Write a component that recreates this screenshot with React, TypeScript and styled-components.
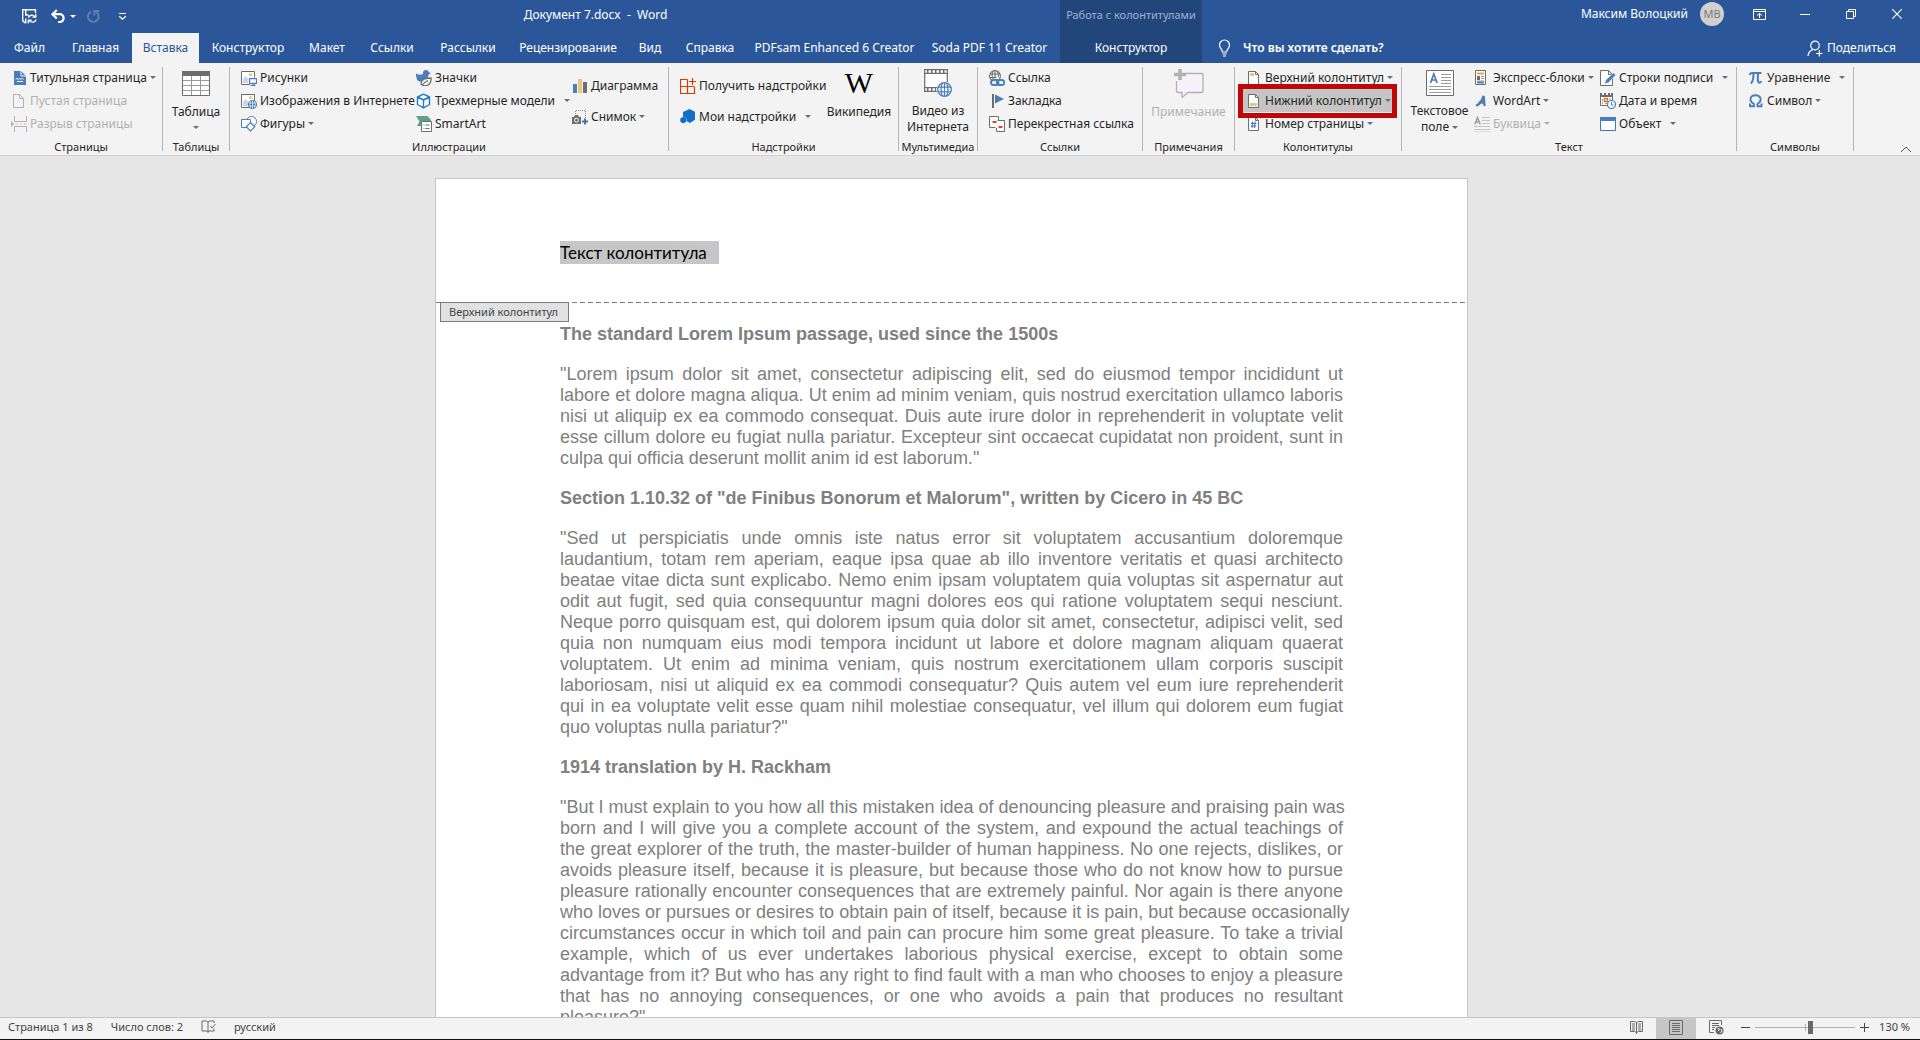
import React from "react";
import styled, { createGlobalStyle, css } from "styled-components";

const ui = `"Noto Sans", "Open Sans", sans-serif`;
const blue = "#2b579a";
const steel = "#4a7ebb";
const grey = "#6d6d6d";
const mute = "#b1b1b1";

const GlobalStyle = createGlobalStyle`
  *, *::before, *::after { box-sizing: border-box; }
  body { margin: 0; background: #e6e6e6; }
  button, input { font: inherit; color: inherit; }
  svg { display: block; flex: none; }
`;

const Shell = styled.div`
  display: flex;
  flex-direction: column;
  height: 100vh;
  overflow: hidden;
  font: 12px/16px ${ui};
  color: #262626;
  border-bottom: 1px solid #111;
`;

/* ---------- window header ---------- */

const Header = styled.header`
  display: grid;
  grid-template-columns: auto auto 1fr;
  grid-template-rows: 33px 30px;
  background: ${blue};
  color: #fff;
  white-space: nowrap;
`;

const PlainButton = styled.button`
  display: flex;
  align-items: center;
  justify-content: center;
  border: 0;
  padding: 0;
  background: none;
  white-space: nowrap;
`;

const TitleBar = styled.div`
  display: flex;
  align-items: center;
  padding: 0 0 8px 20px;
`;

const QuickAccess = styled.div`
  display: flex;
  align-items: center;
  height: 25px;
  padding-top: 8px;
  gap: 10px;
`;

const UndoGroup = styled.div`
  display: flex;
  align-items: center;
  gap: 4px;
  padding-left: 2px;
`;

const CustomizeButton = styled(PlainButton)`
  padding-left: 7px;
`;

const DocTitle = styled.div`
  flex: 1;
  padding: 4px 0 0 4px;
  text-align: center;
  white-space: pre;
`;

const TabBar = styled.nav`
  grid-row: 2;
  display: flex;
  padding-right: 3px;
`;

const Tab = styled(PlainButton)<{ $w: number; $active?: boolean }>`
  width: ${(p) => p.$w}px;
  ${(p) => p.$active && css`
    background: #f3f3f3;
    color: ${blue};
  `}
`;

const ContextTabs = styled.div`
  grid-area: 1 / 2 / 3 / 3;
  display: grid;
  grid-template-rows: 33px 30px;
  width: 142px;
  background: #22457a;
  text-align: center;
`;

const ContextTitle = styled.div`
  padding-top: 7px;
  color: #9fb3d3;
  font-size: 11px;
`;

const WindowBar = styled.div`
  display: flex;
  justify-content: flex-end;
  height: 28px;
`;

const Account = styled(PlainButton)`
  gap: 12px;
  margin-right: 12px;
`;

const Avatar = styled.span`
  width: 24px;
  height: 24px;
  border-radius: 50%;
  background: #d2d0ce;
  color: #7a7a7a;
  font-size: 11px;
  line-height: 24px;
`;

const WindowButton = styled(PlainButton)`
  width: 46px;
`;

const HelpBar = styled.div`
  display: flex;
  align-items: center;
  justify-content: space-between;
  padding: 0 24px 0 16px;
`;

const TellMe = styled.label`
  display: flex;
  align-items: center;
  gap: 12px;
`;

const TellMeInput = styled.input`
  width: 180px;
  border: 0;
  padding: 0;
  background: none;
  font-weight: 600;
  outline: 0;
  &::placeholder { color: #fff; opacity: 1; }
`;

const Share = styled(PlainButton)`
  gap: 4px;
`;

/* ---------- ribbon ---------- */

const Ribbon = styled.div`
  display: flex;
  height: 93px;
  padding-top: 3px;
  border-bottom: 1px solid #d2d2d2;
  background: #f3f3f3;
`;

const Group = styled.section<{ $w: number }>`
  display: flex;
  flex-direction: column;
  flex: none;
  width: ${(p) => p.$w}px;
  background: linear-gradient(#b5b5b5, #b5b5b5) right 1px / 1px 84px no-repeat;
`;

const GroupBody = styled.div<{ $pad: number }>`
  display: flex;
  height: 69px;
  padding-left: ${(p) => p.$pad}px;
`;

const GroupLabel = styled.div`
  padding: 4px 1px 0 0;
  text-align: center;
  white-space: nowrap;
  font-size: 11px;
`;

const Column = styled.div<{ $w?: number; $two?: boolean }>`
  display: flex;
  flex-direction: column;
  align-items: flex-start;
  flex: none;
  width: ${(p) => (p.$w ? p.$w + "px" : "auto")};
  ${(p) => p.$two && css`
    gap: 8px;
    padding-top: 8px;
  `}
`;

const Command = styled(PlainButton)`
  height: 23px;
  gap: 3px;
  &:disabled { color: ${mute}; }
`;

const Caret = styled.span<{ $split?: boolean }>`
  margin-left: ${(p) => (p.$split ? 6 : 0)}px;
  border: solid transparent;
  border-width: 3px 3px 0;
  border-top-color: ${grey};
  :disabled & { border-top-color: ${mute}; }
`;

const BigCommand = styled(PlainButton)<{ $w: number }>`
  flex-direction: column;
  justify-content: flex-start;
  flex: none;
  width: ${(p) => p.$w}px;
  padding-top: 2px;
  line-height: 16px;
  &:disabled { color: ${mute}; }
`;

const BigIcon = styled.span`
  display: flex;
  align-items: center;
  height: 36px;
  padding-bottom: 6px;
`;

const BigCaret = styled(Caret)`
  margin: 6px 0 0;
`;

const Inline = styled.span`
  display: flex;
  align-items: center;
  gap: 3px;
`;

const Highlighted = styled(Command)`
  position: relative;
  width: 149px;
  margin-left: -5px;
  padding-left: 5px;
  justify-content: flex-start;
  background: #c5c5c5;
  &::after {
    content: "";
    position: absolute;
    inset: -5px -5px -6px;
    border: 5px solid #c00606;
  }
`;

const Collapse = styled(PlainButton)`
  margin-left: auto;
  align-self: flex-end;
  padding: 0 8px 2px 0;
`;

/* ---------- document ---------- */

const Workspace = styled.main`
  flex: 1;
  min-height: 0;
  overflow: hidden;
  padding: 22px 17px 0 0;
  background: #e6e6e6;
`;

const Sheet = styled.article`
  width: 1033px;
  margin: 0 auto;
  border: 1px solid #c6c6c6;
  background: #fff;
`;

const PageHeader = styled.header`
  position: relative;
  height: 124px;
  padding: 62px 124px 0;
  background: repeating-linear-gradient(90deg, #7b7b7b 0 5px, transparent 5px 8px) bottom / 100% 1px no-repeat;
`;

const Selected = styled.span`
  display: inline-block;
  padding-right: 12px;
  background: #c6c6c6;
  color: #000;
  font: 17px/23px Lato, "Noto Sans", sans-serif;
`;

const HeaderTag = styled.span`
  position: absolute;
  left: 4px;
  top: 123px;
  padding: 0 10px 0 8px;
  border: 1px solid #7b7b7b;
  background: #e1e1e1;
  color: #444;
  font-size: 11px;
  line-height: 18px;
`;

const PageBody = styled.div`
  padding: 21px 124px 0;
  color: #808080;
  font: 18px/21px "Liberation Sans", Arial, sans-serif;
`;

const Heading = styled.h2`
  margin: 0 0 19px;
  font-size: 18px;
  line-height: 21px;
`;

const Paragraph = styled.p`
  margin: 0 0 19px;
`;

const Line = styled.span`
  display: block;
  white-space: nowrap;
  text-align-last: justify;
  &:last-child { text-align-last: left; }
`;

/* ---------- status bar ---------- */

const StatusBar = styled.footer`
  display: flex;
  align-items: stretch;
  flex: none;
  height: 22px;
  padding: 0 10px 0 8px;
  border-top: 1px solid #c6c6c6;
  background: #f3f3f3;
  color: #444;
  font-size: 11px;
  white-space: nowrap;
`;

const StatusGroup = styled.div<{ $gap: number }>`
  display: flex;
  align-items: center;
  padding-bottom: 3px;
  gap: ${(p) => p.$gap}px;
`;

const Views = styled.div`
  display: flex;
  margin: 0 5px 0 auto;
`;

const ViewButton = styled(PlainButton)<{ $on?: boolean }>`
  width: 40px;
  padding-bottom: 3px;
  background: ${(p) => (p.$on ? "#c6c6c6" : "none")};
`;

const ZoomRange = styled.input`
  appearance: none;
  width: 100px;
  height: 14px;
  margin: 0;
  background:
    linear-gradient(#b0b0b0, #b0b0b0) 50px 50% / 1px 7px no-repeat,
    linear-gradient(#b0b0b0, #b0b0b0) 0 50% / 100% 1px no-repeat;
  &::-webkit-slider-thumb {
    appearance: none;
    width: 5px;
    height: 13px;
    background: #6a6a6a;
  }
`;

const ZoomValue = styled(PlainButton)`
  margin-left: 5px;
`;

/* ---------- icons ---------- */

type IconProps = { w?: number; h?: number; children: React.ReactNode };
const Icon = ({ w = 16, h = 16, children }: IconProps) => (
  <svg width={w} height={h} viewBox={`0 0 ${w} ${h}`} fill="none" aria-hidden="true">{children}</svg>
);

const SaveIcon = () => (
  <Icon w={18} h={17}>
    <path d="M6.500 14.500H4.500L2.700 12.700V1.700H15.500V5M5.700 1.700V7h3M5.700 14.500V10.500" stroke="#fff" strokeWidth="1.400" />
    <path d="M8.200 9.800a4 4 0 0 1 6.800-1.200M15.800 5.800v3.400h-3.400M16.200 11.500a4 4 0 0 1-6.900 1.200M8.300 15.600V12.200h3.400" stroke="#fff" strokeWidth="1.300" />
  </Icon>
);
const UndoIcon = () => (
  <Icon w={16} h={15}>
    <path d="M2 5.200h7.700a3.900 3.900 0 0 1 0 7.800H8" stroke="#fff" strokeWidth="2.200" />
    <path d="M6.800 1 2.400 5.200l4.400 4.200" stroke="#fff" strokeWidth="2.200" />
  </Icon>
);
const RedoIcon = () => (
  <Icon w={15} h={15}>
    <path d="M5 2.600a5.400 5.400 0 1 0 5.200.3M8.300 6.700V2h5" stroke="#5f80b5" strokeWidth="1.900" />
  </Icon>
);
const CustomizeIcon = () => (
  <Icon w={9} h={9}>
    <path d="M1 1.500h7M1.200 4.200l3.300 3 3.300-3" stroke="#fff" strokeWidth="1.200" />
  </Icon>
);
const SmallArrow = () => <Icon w={6} h={4}><path d="M0 0h6L3 3z" fill="#fff" /></Icon>;

const CoverIcon = () => (
  <Icon>
    <path d="M3 1h7l5 5v9H3z" fill={steel} />
    <path d="M10 1v5h5" stroke="#f3f3f3" />
    <path d="m5 9.500 1-1.300 1.300 1.300 1.300-1.300 1.300 1.300 1.300-1.300 1.300 1.300" stroke="#fff" />
    <path d="M6 11.500h6" stroke="#fff" />
  </Icon>
);
const BlankIcon = () => (
  <Icon>
    <path d="M2.500 1.500h6l4 4v9h-10z" fill="#f7f2f9" stroke="#b1b1b1" />
    <path d="M8.500 1.500v4h4" stroke="#b1b1b1" />
  </Icon>
);
const BreakIcon = () => (
  <Icon>
    <path d="M3.500 0v5.500h12V0M3.500 16v-5.500h12V16" fill="#f7f2f9" stroke="#b1b1b1" />
    <path d="M0 5v6l3-3z" fill="#b1b1b1" />
    <path d="M4 8h3m2 0h2m2 0h3" stroke="#c9c9c9" />
  </Icon>
);
const TableIcon = () => (
  <Icon w={28} h={25}>
    <path d="M.5.5h27v24H.5z" fill="#fff" stroke="#6d6d6d" />
    <path d="M0 0h28v5H0z" fill="#6d6d6d" />
    <path d="M1 9.500h26M1 14.500h26M1 19.500h26M9.500 5v19M18.500 5v19" stroke="#9b9b9b" />
  </Icon>
);
const PictureBase = () => (
  <>
    <path d="M.5 1.500h13v13H.500z" fill="#fff" stroke="#6d6d6d" />
    <circle cx="9.500" cy="4.500" r="1.600" fill="#eac282" />
    <path d="M2 13V9l2.500-3 3 3v4z" fill="#c9d6e8" />
  </>
);
const PictureIcon = () => (
  <Icon>
    <PictureBase />
    <path d="M8 7.500h8V13h-3v3H9v-3H7z" fill="#f3f3f3" />
    <path d="M8.600 8.600h6.900v4.800H8.600zM12 13.500V16M9.500 15.500h5" fill="#fff" stroke={steel} strokeWidth="1.200" />
  </Icon>
);
const OnlinePictureIcon = () => (
  <Icon>
    <PictureBase />
    <circle cx="11.500" cy="11.500" r="4.500" fill="#3f74b5" />
    <path d="M11.500 7.500v8M8 10h7M8 13h7M9.500 8.200q-1.500 3.300 0 6.600M13.500 8.200q1.500 3.300 0 6.600" stroke="#dce8f5" strokeWidth=".9" />
  </Icon>
);
const ShapesIcon = () => (
  <Icon>
    <circle cx="10.500" cy="5.500" r="5" fill="#fff" stroke="#4a7ebb" />
    <path d="M.5 3.500h9v8h-9z" fill="#fff" stroke="#4a7ebb" />
    <path d="m9.500 6.500 4.200 4.300-4.200 4.200-4.200-4.200z" fill="#fff" stroke="#4a7ebb" strokeWidth="1.200" />
  </Icon>
);
const BirdIcon = () => (
  <Icon>
    <path d="M0 3.500c3 1.500 5 1.500 7 .5-.5-2.500 1-4 3-4 1.600 0 2.700 1 2.900 2.300L15 3.500l-2.200.8C12.500 8 9 11.500 5 11.500 2 11.500.3 9.500 1 9c-.8-1-1-3.500-1-5.500z" fill={steel} />
    <path d="M5.500 15.300c-1.500-4 1-7.300 9.500-7.300.5 4.500-2 7.800-6 7.800-1 0-2-.3-2.600-.8 1.600-2.300 3.300-3.500 5.600-4.500" fill="#f3f3f3" stroke="#6d6d6d" strokeWidth="1.300" />
  </Icon>
);
const CubeIcon = () => (
  <Icon>
    <path d="M7.500 1.200 13.500 4v7.500l-6 3.300-6-3.300V4zM1.500 4l6 3 6-3M7.500 7v7.800" fill="#fff" stroke="#1e7cc8" strokeWidth="1.400" strokeLinejoin="round" />
  </Icon>
);
const SmartArtIcon = () => (
  <Icon>
    <path d="M0 0h11.500L15 4v2H5v4H1l2.500-4.500z" fill="#5fa089" />
    <path d="M5.500 5.500h10v10h-10z" fill="#fff" stroke="#6d6d6d" />
    <path d="M7.500 9h1m1 0h4m-6 3.500h1m1 0h4" stroke="#6d6d6d" />
  </Icon>
);
const ChartIcon = () => (
  <Icon>
    <path d="M1 6h4v9H1z" fill={steel} /><path d="M6 1h4v14H6z" fill="#eac282" /><path d="M11 4h4v11h-4z" fill="#6d6d6d" />
  </Icon>
);
const ScreenshotIcon = () => (
  <Icon>
    <path d="M3.500 7V1.500h10V9" stroke="#8a8a8a" strokeDasharray="1 1" />
    <path d="M0 8h2l1-2h3l1 2h2v7H0z" fill="#6d6d6d" />
    <circle cx="4.500" cy="11.200" r="2" fill="#6d6d6d" stroke="#fff" />
    <path d="M13 9.500v6M10 12.500h6" stroke="#3f74b5" strokeWidth="2" />
  </Icon>
);
const StoreIcon = () => (
  <Icon>
    <path d="M7.500 1.500h-7v14h14v-6.500M.5 8.500h14M7.500 1.500v14M12.500 0v7M9 3.500h7" stroke="#d83b01" strokeWidth="1.200" />
  </Icon>
);
const MyAddinsIcon = () => (
  <Icon>
    <path d="m9.500 0 5.500 2.800v8L10 14l-3.500-2V9.500L3 7.500V3z" fill="#0f70c5" />
    <path d="m3.200 7.800 3 1.500v3.400L3.200 14.500.3 12.800V9.500z" fill="#0f70c5" />
  </Icon>
);
const VideoIcon = () => (
  <Icon w={28} h={28}>
    <path d="M1 1h22v22H1z" fill="#fff" />
    <path d="M.7 0v23M23.300 0v14M0 .7h24M0 4.300h24M0 18.700h13M0 22.300h13" stroke="#6d6d6d" strokeWidth="1.200" />
    <path d="M3 2.500h18M3 20.500h9" stroke="#6d6d6d" strokeWidth="3" strokeDasharray="1.500 2.500" />
    <circle cx="20.500" cy="20.500" r="8" fill="#f3f3f3" />
    <circle cx="20.500" cy="20.500" r="6.800" fill="#fff" stroke={steel} strokeWidth="1.300" />
    <path d="M20.500 14v13M14 18.200h13M14 22.800h13M18.500 14q-3 6.500 0 13M22.500 14q3 6.500 0 13" stroke={steel} strokeWidth="1.200" />
  </Icon>
);
const LinkIcon = () => (
  <Icon>
    <circle cx="6" cy="6" r="5.400" stroke="#6d6d6d" strokeWidth="1.100" />
    <path d="M6 .5v8M1 4h10M.5 7.500h7M4 1q-2 4.500 0 8M8 1q2 3 1.300 6" stroke="#6d6d6d" />
    <path d="M3 9h13v7H3z" fill="#f3f3f3" />
    <rect x="2" y="10" width="7.500" height="5" rx="2.500" stroke={steel} strokeWidth="1.900" />
    <rect x="7.800" y="10" width="7.500" height="5" rx="2.500" stroke={steel} strokeWidth="1.900" />
  </Icon>
);
const BookmarkIcon = () => (
  <Icon><path d="M3 1h2v14H3z" fill="#6d6d6d" /><path d="M6 1.500 15 6l-9 4.500z" fill={steel} /></Icon>
);
const CrossRefIcon = () => (
  <Icon>
    <path d="M.5.5h9v11h-9z" fill="#fff" stroke="#6d6d6d" />
    <path d="M7.500 4.500h8v11h-8z" fill="#fff" stroke="#6d6d6d" />
    <path d="M6.500 4h2v8h-2z" fill="#fff" />
    <path d="M3.500 6h4M9.500 11h4" stroke="#d24726" strokeWidth="2" />
  </Icon>
);
const CommentIcon = () => (
  <Icon w={30} h={29}>
    <path d="M4.500 4.500h23a1.500 1.500 0 0 1 1.500 1.500v16a1.500 1.500 0 0 1-1.500 1.500H14l-6 5v-5H4A1.500 1.500 0 0 1 2.500 22V6z" fill="#f7f2f9" stroke="#b1b1b1" strokeWidth="1.300" />
    <path d="M-1-1h13v9H9v4H-1z" fill="#f3f3f3" />
    <path d="M6 0v11M0 5.500h12" stroke="#b1b1b1" strokeWidth="3.600" />
  </Icon>
);
const Folded = ({ children }: { children: React.ReactNode }) => (
  <Icon w={14}>
    <path d="M.5 1.500h7l3 3v10H.500z" fill="#fff" stroke="#6d6d6d" />
    <path d="M7.500 1.500v3h3" stroke="#6d6d6d" />
    {children}
  </Icon>
);
const TopIcon = () => <Folded><path d="M2 3h4v3H2z" fill="#eac282" /></Folded>;
const BottomIcon = () => <Folded><path d="M2 10h7v3H2z" fill="#eac282" /></Folded>;
const NumberIcon = () => <Folded><path d="M4.700 5.500 4 12M7.200 5.500 6.500 12M3 7.500h5.500M2.700 10h5.500" stroke="#3f74b5" /></Folded>;

const TextBoxIcon = () => (
  <Icon w={28} h={26}>
    <path d="M.5.500h27v25H.500z" fill="#fff" stroke="#6d6d6d" />
    <path d="M15 4.500h10M15 7.500h10M15 10.500h10M15 13.500h10M3 16.500h22M3 19.500h22M3 22.500h22" stroke="#9b9b9b" />
    <path d="m4.500 13 3.300-9 3.300 9M5.700 10h4.300" stroke={steel} strokeWidth="1.700" />
  </Icon>
);
const QuickPartsIcon = () => (
  <Icon>
    <path d="M1.500.5h10v14h-10z" fill="#fff" stroke="#6d6d6d" />
    <path d="M3 3.500h7" stroke="#eaa24a" strokeWidth="2" /><path d="M3 6h3v4H3z" fill="#6d6d6d" />
    <path d="M7 6.500h3M7 8.500h3M3 11h7" stroke="#9b9b9b" /><path d="M3 12.500h7" stroke={steel} strokeWidth="2" />
  </Icon>
);
const WordArtIcon = () => (
  <Icon><path d="M2 12.500c3-.5 6-5 7.700-9.500L10.500 13M4.500 9.500h6" stroke={steel} strokeWidth="2.300" /></Icon>
);
const DropCapIcon = () => (
  <Icon>
    <path d="M8 1.500h8M8 4.500h8M8 7.500h8M0 10.500h16M0 13.500h16M0 16h16" stroke="#c4c4c4" />
    <path d="m.8 8.500 2.700-7 2.700 7M1.700 6h3.600" stroke="#9f9f9f" strokeWidth="1.500" />
  </Icon>
);
const SignatureIcon = () => (
  <Icon>
    <path d="M.5.500h8l4 4v11H.500z" fill="#fff" stroke="#6d6d6d" /><path d="M8.500.5v4h4" stroke="#6d6d6d" />
    <path d="m4.500 14 1.300-4 7.700-7.200 2.200 2.200-7.200 7.700z" fill={steel} stroke="#f3f3f3" strokeWidth=".6" />
  </Icon>
);
const DateIcon = () => (
  <Icon>
    <path d="M.5 2.500h12v10H.500z" fill="#fff" stroke="#6d6d6d" />
    <path d="M0 0h2v2h2V0h2v2h2V0h2v2h1V0h2v4H0z" fill="#6d6d6d" />
    <path d="M2.500 6v5M5 10.500h2M9 6h2" stroke="#9b9b9b" strokeDasharray="2 1" />
    <path d="M4.500 5.500h3v3h-3z" stroke="#e2731d" strokeWidth="1.400" />
    <circle cx="11.500" cy="11.500" r="4" fill="#fff" stroke={steel} strokeWidth="1.200" /><path d="M11.500 9v3h2" stroke={steel} />
  </Icon>
);
const ObjectIcon = () => (
  <Icon><path d="M.5 1.500h15v13H.500z" fill="#fff" stroke="#3f74b5" /><path d="M0 1h16v4H0z" fill={steel} /></Icon>
);
const PiIcon = () => (
  <Icon>
    <path d="M1.500 4.800C2.500 2.500 3.500 3 5 3h8.500M5.500 3.500C5.500 8 5 11.500 3 13.500M10 3.500c-.3 5-.6 9 1.500 9.300 1.300 0 1.500-1 1.600-1.800" stroke={steel} strokeWidth="2" />
  </Icon>
);
const OmegaIcon = () => (
  <Icon>
    <path d="M2 10.500v2.700h4V11C0 7.500 2.500 2.200 7.500 2.200S15 7.500 9.500 11v2.200h4v-2.700" stroke={steel} strokeWidth="1.900" />
  </Icon>
);

const BulbIcon = () => (
  <Icon w={13} h={18}>
    <path d="M4.500 13c0-2.500-3-3.500-3-7a5 5 0 0 1 10 0c0 3.500-3 4.500-3 7zM4.500 15h4M5 17h3" stroke="#fff" strokeWidth="1.200" />
  </Icon>
);
const ShareIcon = () => (
  <Icon w={16} h={17}>
    <circle cx="8" cy="5.500" r="4.300" stroke="#fff" strokeWidth="1.200" />
    <path d="M1 16c.3-3.500 2-5.500 5-6.500M9 13.500h6.500M12.300 10v6.500" stroke="#fff" strokeWidth="1.200" />
  </Icon>
);
const RibbonOptionsIcon = () => (
  <Icon w={13} h={11}><path d="M.5.5h12v10H.500zM.5 2.500h12M6.500 9V4.500M4 6.500l2.500-2 2.500 2" stroke="#fff" /></Icon>
);
const MinimizeIcon = () => <Icon w={10} h={10}><path d="M0 5.500h10" stroke="#fff" /></Icon>;
const RestoreIcon = () => <Icon w={10} h={10}><path d="M.5 2.500h7v7h-7zM2.500 2V.500h7v7H8" stroke="#fff" /></Icon>;
const CloseIcon = () => <Icon w={10} h={10}><path d="m0 0 10 10M10 0 0 10" stroke="#fff" strokeWidth="1.100" /></Icon>;

const ProofIcon = () => (
  <Icon w={15} h={14}>
    <path d="M7 2 5.500 1H1v10h5l1 1.500V2l1.500-1H13v2M7 12l1-1h5V8.500M9.500 6l1.500 2 3.500-4" stroke="#6a6a6a" />
  </Icon>
);
const ReadIcon = () => (
  <Icon w={13} h={14}>
    <path d="M.5 1.500h4l2 1 2-1h4v10h-4l-2 1-2-1h-4zM6.500 2v12M2 4h3M2 6h3M2 8h3M2 10h3M8 4h3M8 6h3M8 8h3M8 10h3" stroke="#6a6a6a" />
  </Icon>
);
const PrintIcon = () => (
  <Icon w={14} h={15}><path d="M.5.500h13v14H.500zM3 3.500h8M3 5.500h8M3 7.500h8M3 9.500h8M3 11.500h8" stroke="#6a6a6a" /></Icon>
);
const WebIcon = () => (
  <Icon w={15} h={15}>
    <path d="M5 12.500H.500v-12h12V5M3 3.500h7M3 5.500h7M3 7.500h3M3 9.500h2" stroke="#6a6a6a" />
    <circle cx="10.500" cy="10.500" r="4" fill="#6a6a6a" /><path d="m8.500 8 2 1-1 2M12 9l1 2-1.500 2" stroke="#f3f3f3" />
  </Icon>
);

const WikiIcon = styled.span`
  font: 30px/30px "Liberation Serif", "Times New Roman", serif;
  color: #000;
`;

/* ---------- composition ---------- */

type CmdProps = { icon: React.ReactNode; text: string; caret?: boolean; split?: boolean; disabled?: boolean };
const Cmd = ({ icon, text, caret, split, disabled }: CmdProps) => (
  <Command disabled={disabled}>
    {icon}
    <span>{text}</span>
    {(caret || split) && <Caret $split={split} />}
  </Command>
);

type RibbonGroupProps = { label: string; w: number; pad?: number; children: React.ReactNode };
const RibbonGroup = ({ label, w, pad = 0, children }: RibbonGroupProps) => (
  <Group $w={w} aria-label={label}>
    <GroupBody $pad={pad}>{children}</GroupBody>
    <GroupLabel>{label}</GroupLabel>
  </Group>
);

const tabs: [string, number][] = [
  ["Файл", 59], ["Главная", 73], ["Вставка", 67], ["Конструктор", 98], ["Макет", 60], ["Ссылки", 70], ["Рассылки", 82],
  ["Рецензирование", 118], ["Вид", 46], ["Справка", 74], ["PDFsam Enhanced 6 Creator", 175], ["Soda PDF 11 Creator", 135],
];

const passages = [
  {
    title: "The standard Lorem Ipsum passage, used since the 1500s",
    lines: [
      "\"Lorem ipsum dolor sit amet, consectetur adipiscing elit, sed do eiusmod tempor incididunt ut",
      "labore et dolore magna aliqua. Ut enim ad minim veniam, quis nostrud exercitation ullamco laboris",
      "nisi ut aliquip ex ea commodo consequat. Duis aute irure dolor in reprehenderit in voluptate velit",
      "esse cillum dolore eu fugiat nulla pariatur. Excepteur sint occaecat cupidatat non proident, sunt in",
      "culpa qui officia deserunt mollit anim id est laborum.\"",
    ],
  },
  {
    title: "Section 1.10.32 of \"de Finibus Bonorum et Malorum\", written by Cicero in 45 BC",
    lines: [
      "\"Sed ut perspiciatis unde omnis iste natus error sit voluptatem accusantium doloremque",
      "laudantium, totam rem aperiam, eaque ipsa quae ab illo inventore veritatis et quasi architecto",
      "beatae vitae dicta sunt explicabo. Nemo enim ipsam voluptatem quia voluptas sit aspernatur aut",
      "odit aut fugit, sed quia consequuntur magni dolores eos qui ratione voluptatem sequi nesciunt.",
      "Neque porro quisquam est, qui dolorem ipsum quia dolor sit amet, consectetur, adipisci velit, sed",
      "quia non numquam eius modi tempora incidunt ut labore et dolore magnam aliquam quaerat",
      "voluptatem. Ut enim ad minima veniam, quis nostrum exercitationem ullam corporis suscipit",
      "laboriosam, nisi ut aliquid ex ea commodi consequatur? Quis autem vel eum iure reprehenderit",
      "qui in ea voluptate velit esse quam nihil molestiae consequatur, vel illum qui dolorem eum fugiat",
      "quo voluptas nulla pariatur?\"",
    ],
  },
  {
    title: "1914 translation by H. Rackham",
    lines: [
      "\"But I must explain to you how all this mistaken idea of denouncing pleasure and praising pain was",
      "born and I will give you a complete account of the system, and expound the actual teachings of",
      "the great explorer of the truth, the master-builder of human happiness. No one rejects, dislikes, or",
      "avoids pleasure itself, because it is pleasure, but because those who do not know how to pursue",
      "pleasure rationally encounter consequences that are extremely painful. Nor again is there anyone",
      "who loves or pursues or desires to obtain pain of itself, because it is pain, but because occasionally",
      "circumstances occur in which toil and pain can procure him some great pleasure. To take a trivial",
      "example, which of us ever undertakes laborious physical exercise, except to obtain some",
      "advantage from it? But who has any right to find fault with a man who chooses to enjoy a pleasure",
      "that has no annoying consequences, or one who avoids a pain that produces no resultant",
      "pleasure?\"",
    ],
  },
];

export default function App() {
  return (
    <Shell>
      <GlobalStyle />
      <Header>
        <TitleBar>
          <QuickAccess>
            <PlainButton aria-label="Сохранить"><SaveIcon /></PlainButton>
            <UndoGroup>
              <PlainButton aria-label="Отменить"><UndoIcon /></PlainButton>
              <SmallArrow />
            </UndoGroup>
            <PlainButton aria-label="Повторить"><RedoIcon /></PlainButton>
            <CustomizeButton aria-label="Настройка панели"><CustomizeIcon /></CustomizeButton>
          </QuickAccess>
          <DocTitle>{"Документ 7.docx  -  Word"}</DocTitle>
        </TitleBar>
        <TabBar>
          {tabs.map(([name, w]) => (
            <Tab key={name} $w={w} $active={name === "Вставка"}>{name}</Tab>
          ))}
        </TabBar>
        <ContextTabs>
          <ContextTitle>Работа с колонтитулами</ContextTitle>
          <PlainButton>Конструктор</PlainButton>
        </ContextTabs>
        <WindowBar>
          <Account>Максим Волоцкий<Avatar>МВ</Avatar></Account>
          <WindowButton aria-label="Параметры ленты"><RibbonOptionsIcon /></WindowButton>
          <WindowButton aria-label="Свернуть"><MinimizeIcon /></WindowButton>
          <WindowButton aria-label="Восстановить"><RestoreIcon /></WindowButton>
          <WindowButton aria-label="Закрыть"><CloseIcon /></WindowButton>
        </WindowBar>
        <HelpBar>
          <TellMe><BulbIcon /><TellMeInput aria-label="Что вы хотите сделать?" placeholder="Что вы хотите сделать?" /></TellMe>
          <Share><ShareIcon />Поделиться</Share>
        </HelpBar>
      </Header>

      <Ribbon>
        <RibbonGroup label="Страницы" w={163} pad={11}>
          <Column>
            <Cmd icon={<CoverIcon />} text="Титульная страница" caret />
            <Cmd icon={<BlankIcon />} text="Пустая страница" disabled />
            <Cmd icon={<BreakIcon />} text="Разрыв страницы" disabled />
          </Column>
        </RibbonGroup>
        <RibbonGroup label="Таблицы" w={67}>
          <BigCommand $w={66}><BigIcon><TableIcon /></BigIcon>Таблица<BigCaret /></BigCommand>
        </RibbonGroup>
        <RibbonGroup label="Иллюстрации" w={439} pad={11}>
          <Column $w={175}>
            <Cmd icon={<PictureIcon />} text="Рисунки" />
            <Cmd icon={<OnlinePictureIcon />} text="Изображения в Интернете" />
            <Cmd icon={<ShapesIcon />} text="Фигуры" caret />
          </Column>
          <Column $w={156}>
            <Cmd icon={<BirdIcon />} text="Значки" />
            <Cmd icon={<CubeIcon />} text="Трехмерные модели" split />
            <Cmd icon={<SmartArtIcon />} text="SmartArt" />
          </Column>
          <Column $two>
            <Cmd icon={<ChartIcon />} text="Диаграмма" />
            <Cmd icon={<ScreenshotIcon />} text="Снимок" caret />
          </Column>
        </RibbonGroup>
        <RibbonGroup label="Надстройки" w={230} pad={11}>
          <Column $w={144} $two>
            <Cmd icon={<StoreIcon />} text="Получить надстройки" />
            <Cmd icon={<MyAddinsIcon />} text="Мои надстройки" split />
          </Column>
          <BigCommand $w={70}><BigIcon><WikiIcon>W</WikiIcon></BigIcon>Википедия</BigCommand>
        </RibbonGroup>
        <RibbonGroup label="Мультимедиа" w={79}>
          <BigCommand $w={78}><BigIcon><VideoIcon /></BigIcon>Видео из<br />Интернета</BigCommand>
        </RibbonGroup>
        <RibbonGroup label="Ссылки" w={165} pad={11}>
          <Column>
            <Cmd icon={<LinkIcon />} text="Ссылка" />
            <Cmd icon={<BookmarkIcon />} text="Закладка" />
            <Cmd icon={<CrossRefIcon />} text="Перекрестная ссылка" />
          </Column>
        </RibbonGroup>
        <RibbonGroup label="Примечания" w={92}>
          <BigCommand $w={91} disabled><BigIcon><CommentIcon /></BigIcon>Примечание</BigCommand>
        </RibbonGroup>
        <RibbonGroup label="Колонтитулы" w={167} pad={13}>
          <Column>
            <Cmd icon={<TopIcon />} text="Верхний колонтитул" caret />
            <Highlighted><BottomIcon /><span>Нижний колонтитул</span><Caret /></Highlighted>
            <Cmd icon={<NumberIcon />} text="Номер страницы" caret />
          </Column>
        </RibbonGroup>
        <RibbonGroup label="Текст" w={335} pad={3}>
          <BigCommand $w={69}>
            <BigIcon><TextBoxIcon /></BigIcon>Текстовое<Inline>поле<Caret /></Inline>
          </BigCommand>
          <Column $w={126}>
            <Cmd icon={<QuickPartsIcon />} text="Экспресс-блоки" caret />
            <Cmd icon={<WordArtIcon />} text="WordArt" caret />
            <Cmd icon={<DropCapIcon />} text="Буквица" caret disabled />
          </Column>
          <Column>
            <Cmd icon={<SignatureIcon />} text="Строки подписи" split />
            <Cmd icon={<DateIcon />} text="Дата и время" />
            <Cmd icon={<ObjectIcon />} text="Объект" split />
          </Column>
        </RibbonGroup>
        <RibbonGroup label="Символы" w={117} pad={11}>
          <Column>
            <Cmd icon={<PiIcon />} text="Уравнение" split />
            <Cmd icon={<OmegaIcon />} text="Символ" caret />
          </Column>
        </RibbonGroup>
        <Collapse aria-label="Свернуть ленту">
          <Icon w={12} h={8}><path d="M1 7l5-5 5 5" stroke="#555" /></Icon>
        </Collapse>
      </Ribbon>

      <Workspace>
        <Sheet>
          <PageHeader>
            <Selected>Текст колонтитула</Selected>
            <HeaderTag>Верхний колонтитул</HeaderTag>
          </PageHeader>
          <PageBody>
            {passages.map((p) => (
              <React.Fragment key={p.title}>
                <Heading>{p.title}</Heading>
                <Paragraph>
                  {p.lines.map((line) => <Line key={line}>{line} </Line>)}
                </Paragraph>
              </React.Fragment>
            ))}
          </PageBody>
        </Sheet>
      </Workspace>

      <StatusBar>
        <StatusGroup $gap={18}>
          <PlainButton>Страница 1 из 8</PlainButton>
          <PlainButton>Число слов: 2</PlainButton>
          <PlainButton aria-label="Правописание"><ProofIcon /></PlainButton>
          <PlainButton>русский</PlainButton>
        </StatusGroup>
        <Views>
          <ViewButton aria-label="Режим чтения"><ReadIcon /></ViewButton>
          <ViewButton $on aria-label="Разметка страницы"><PrintIcon /></ViewButton>
          <ViewButton aria-label="Веб-документ"><WebIcon /></ViewButton>
        </Views>
        <StatusGroup $gap={5}>
          <PlainButton aria-label="Уменьшить"><Icon w={9} h={9}><path d="M0 4.500h9" stroke="#444" /></Icon></PlainButton>
          <ZoomRange type="range" min={0} max={100} defaultValue={56} aria-label="Масштаб" />
          <PlainButton aria-label="Увеличить"><Icon w={9} h={9}><path d="M0 4.500h9M4.500 0v9" stroke="#444" /></Icon></PlainButton>
          <ZoomValue>130 %</ZoomValue>
        </StatusGroup>
      </StatusBar>
    </Shell>
  );
}
